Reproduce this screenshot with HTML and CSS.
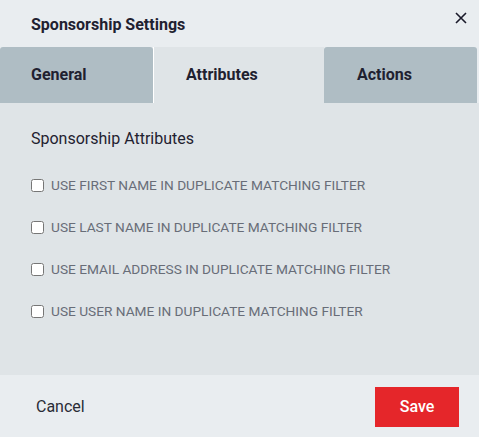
FILE: index.html
```html
<!DOCTYPE html>
<html>
<head>
<meta charset="utf-8">
<link rel="stylesheet" href="styles.css">
</head>
<body>
<div class="dialog">
  <div class="header">
    <h1 class="title">Sponsorship Settings</h1>
    <button class="close" aria-label="Close">
      <svg width="12" height="12" viewBox="0 0 12 12"><path d="M1 1 L11 11 M11 1 L1 11" stroke="#1a1a2a" stroke-width="1.6" fill="none"/></svg>
    </button>
  </div>
  <div class="tabs">
    <div class="tab tab-general">General</div>
    <div class="tab tab-active">Attributes</div>
    <div class="tab tab-actions">Actions</div>
  </div>
  <div class="content">
    <h2 class="section-title">Sponsorship Attributes</h2>
    <label class="row"><input type="checkbox" class="cb"><span>USE FIRST NAME IN DUPLICATE MATCHING FILTER</span></label>
    <label class="row"><input type="checkbox" class="cb"><span>USE LAST NAME IN DUPLICATE MATCHING FILTER</span></label>
    <label class="row"><input type="checkbox" class="cb"><span>USE EMAIL ADDRESS IN DUPLICATE MATCHING FILTER</span></label>
    <label class="row"><input type="checkbox" class="cb"><span>USE USER NAME IN DUPLICATE MATCHING FILTER</span></label>
  </div>
  <div class="footer">
    <button class="cancel">Cancel</button>
    <button class="save">Save</button>
  </div>
</div>
</body>
</html>
```
FILE: styles.css
```css
* { box-sizing: border-box; }
html, body { margin: 0; padding: 0; }
body {
  background: #e9edf0;
  font-family: Roboto, "Liberation Sans", sans-serif;
  color: #1f2130;
}
.dialog {
  width: 479px;
  height: 437px;
  display: flex;
  flex-direction: column;
}
.header {
  height: 47px;
  display: flex;
  align-items: center;
  justify-content: space-between;
  padding: 2px 11px 0 31px;
}
.title {
  margin: 0;
  font-size: 16px;
  font-weight: 700;
  color: #1f2130;
}
.close {
  border: 0;
  background: transparent;
  padding: 0;
  margin-top: -13px;
  width: 14px;
  height: 14px;
  display: flex;
  align-items: center;
  justify-content: center;
}
.tabs {
  height: 56px;
  display: flex;
  padding-right: 2px;
}
.tab {
  display: flex;
  align-items: center;
  padding-bottom: 2px;
  font-size: 16px;
  font-weight: 700;
  color: #1f2130;
  background: #afbdc4;
  border-radius: 3px 3px 0 0;
}
.tab-general { width: 153px; padding-left: 31px; }
.tab-active {
  width: 171px;
  padding-left: 32px;
  background: #dfe4e7;
  border-left: 1px solid #ffffff;
  border-radius: 0;
}
.tab-actions { flex: 1; padding-left: 33px; }
.content {
  flex: 1;
  background: #dfe4e7;
  padding: 26px 31px 0;
}
.section-title {
  margin: 0 0 15px;
  font-size: 16px;
  line-height: 20px;
  font-weight: 400;
  color: #1f2130;
}
.row {
  height: 42px;
  display: flex;
  align-items: center;
  gap: 7px;
  font-size: 13.7px;
  color: #686d78;
}
.cb {
  margin: 0;
  width: 13px;
  height: 13px;
}
.footer {
  height: 62px;
  display: flex;
  align-items: center;
  justify-content: space-between;
  padding: 1px 20px 0 36px;
}
.cancel {
  border: 0;
  background: transparent;
  padding: 0;
  font-family: inherit;
  font-size: 16px;
  color: #2a2c36;
}
.save {
  width: 84px;
  height: 40px;
  border: 0;
  background: #e5262a;
  color: #ffffff;
  font-family: inherit;
  font-size: 16px;
  font-weight: 500;
}
```
